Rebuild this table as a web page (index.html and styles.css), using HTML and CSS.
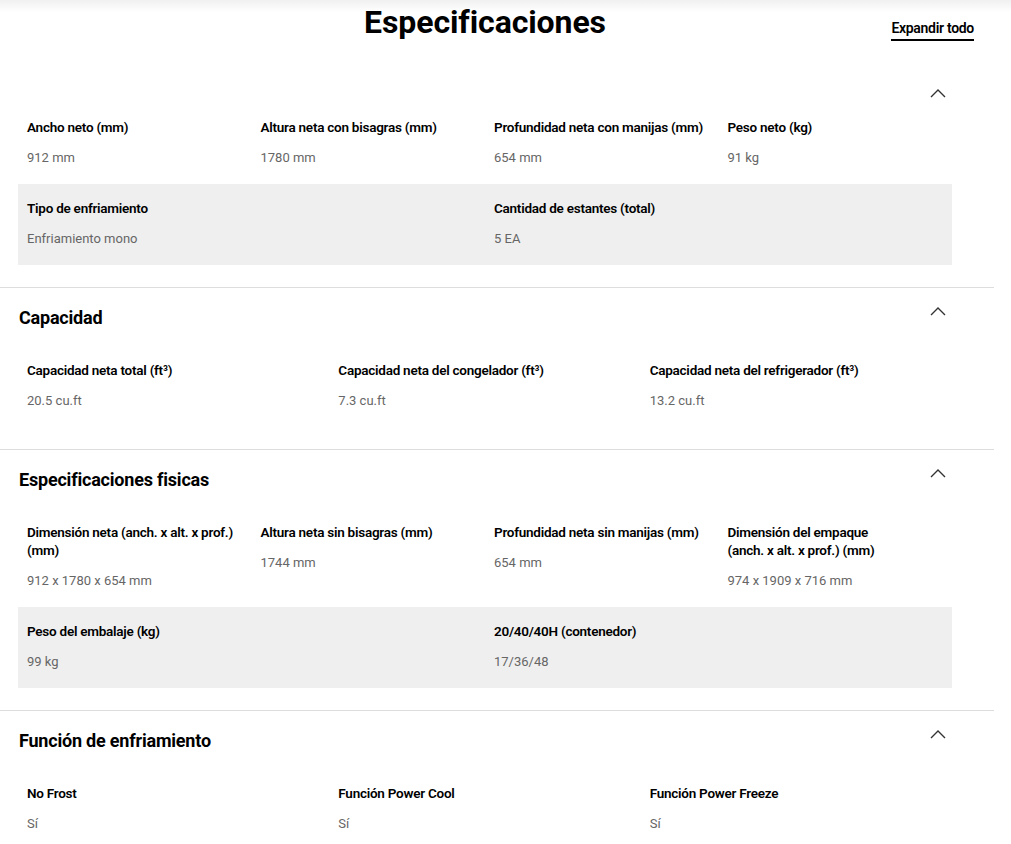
FILE: index.html
```html
<!DOCTYPE html>
<html lang="es">
<head>
<meta charset="utf-8">
<title>Especificaciones</title>
<link rel="stylesheet" href="styles.css">
</head>
<body>
<div class="page">
  <header class="head">
    <h1 class="head-title">Especificaciones</h1>
    <a class="expand" href="#">Expandir todo</a>
  </header>

  <section class="spec">
    <div class="spec-head spec-head-first">
      <span class="spec-title"></span>
      <svg class="chev" width="16" height="9" viewBox="0 0 16 9"><path d="M1 8 L8 1 L15 8" fill="none" stroke="#333" stroke-width="1.4"/></svg>
    </div>
    <div class="row cols-4">
      <div class="cell"><div class="label">Ancho neto (mm)</div><div class="value">912 mm</div></div>
      <div class="cell"><div class="label">Altura neta con bisagras (mm)</div><div class="value">1780 mm</div></div>
      <div class="cell"><div class="label">Profundidad neta con manijas (mm)</div><div class="value">654 mm</div></div>
      <div class="cell"><div class="label">Peso neto (kg)</div><div class="value">91 kg</div></div>
    </div>
    <div class="row cols-2 shaded">
      <div class="cell"><div class="label">Tipo de enfriamiento</div><div class="value">Enfriamiento mono</div></div>
      <div class="cell"><div class="label">Cantidad de estantes (total)</div><div class="value">5 EA</div></div>
    </div>
  </section>

  <section class="spec">
    <div class="spec-head">
      <h2 class="spec-title">Capacidad</h2>
      <svg class="chev" width="16" height="9" viewBox="0 0 16 9"><path d="M1 8 L8 1 L15 8" fill="none" stroke="#333" stroke-width="1.4"/></svg>
    </div>
    <div class="row cols-3">
      <div class="cell"><div class="label">Capacidad neta total (ft³)</div><div class="value">20.5 cu.ft</div></div>
      <div class="cell"><div class="label">Capacidad neta del congelador (ft³)</div><div class="value">7.3 cu.ft</div></div>
      <div class="cell"><div class="label">Capacidad neta del refrigerador (ft³)</div><div class="value">13.2 cu.ft</div></div>
    </div>
  </section>

  <section class="spec">
    <div class="spec-head">
      <h2 class="spec-title">Especificaciones fisicas</h2>
      <svg class="chev" width="16" height="9" viewBox="0 0 16 9"><path d="M1 8 L8 1 L15 8" fill="none" stroke="#333" stroke-width="1.4"/></svg>
    </div>
    <div class="row cols-4">
      <div class="cell"><div class="label">Dimensión neta (anch. x alt. x prof.) (mm)</div><div class="value">912 x 1780 x 654 mm</div></div>
      <div class="cell"><div class="label">Altura neta sin bisagras (mm)</div><div class="value">1744 mm</div></div>
      <div class="cell"><div class="label">Profundidad neta sin manijas (mm)</div><div class="value">654 mm</div></div>
      <div class="cell"><div class="label">Dimensión del empaque<br>(anch. x alt. x prof.) (mm)</div><div class="value">974 x 1909 x 716 mm</div></div>
    </div>
    <div class="row cols-2 shaded">
      <div class="cell"><div class="label">Peso del embalaje (kg)</div><div class="value">99 kg</div></div>
      <div class="cell"><div class="label">20/40/40H (contenedor)</div><div class="value">17/36/48</div></div>
    </div>
  </section>

  <section class="spec">
    <div class="spec-head">
      <h2 class="spec-title">Función de enfriamiento</h2>
      <svg class="chev" width="16" height="9" viewBox="0 0 16 9"><path d="M1 8 L8 1 L15 8" fill="none" stroke="#333" stroke-width="1.4"/></svg>
    </div>
    <div class="row cols-3">
      <div class="cell"><div class="label">No Frost</div><div class="value">Sí</div></div>
      <div class="cell"><div class="label">Función Power Cool</div><div class="value">Sí</div></div>
      <div class="cell"><div class="label">Función Power Freeze</div><div class="value">Sí</div></div>
    </div>
  </section>
</div>
</body>
</html>
```

FILE: styles.css
```css
html, body {
  margin: 0;
  padding: 0;
  background: #fff;
}
body {
  font-family: Roboto, "Noto Sans", Arial, sans-serif;
  color: #000;
  background: linear-gradient(to bottom, rgba(0,0,0,0.06), rgba(0,0,0,0) 12px) no-repeat;
}
.page {
  width: 994px;
  overflow: hidden;
  height: 844px;
}
.head {
  display: grid;
  grid-template-columns: 1fr auto 1fr;
  padding-right: 24px;
  height: 44px;
}
.head-title {
  grid-column: 2;
  margin: 0;
  font-size: 32px;
  line-height: 44px;
  font-weight: 700;
  letter-spacing: -0.1px;
}
.expand {
  grid-column: 3;
  justify-self: end;
  align-self: start;
  margin-top: 19px;
  margin-right: -4px;
  padding-bottom: 1px;
  font-size: 14px;
  line-height: 19px;
  font-weight: 600;
  letter-spacing: -0.3px;
  color: #000;
  text-decoration: none;
  border-bottom: 2px solid #000;
}
.spec {
  padding: 0 42px 22px 18px;
  border-bottom: 1px solid #ddd;
}
.spec-head {
  display: flex;
  justify-content: space-between;
  align-items: flex-start;
  padding-top: 18px;
  margin-bottom: 16px;
}
.spec-head-first {
  padding-top: 45px;
  margin-bottom: 5px;
}
.spec-title {
  margin: 0 0 0 1px;
  font-size: 18px;
  line-height: 24px;
  font-weight: 700;
  letter-spacing: -0.2px;
}
.chev {
  display: block;
  margin-top: 1px;
  margin-right: 6px;
}
.spec-head-first .chev {
  margin-top: 0;
}
.row {
  display: grid;
}
.cols-4 { grid-template-columns: repeat(4, 1fr); }
.cols-3 { grid-template-columns: repeat(3, 1fr); }
.cols-2 { grid-template-columns: repeat(2, 1fr); }
.shaded { background: #efefef; }
.cell {
  padding: 15px 9px 16px;
}
.label {
  font-size: 13.5px;
  line-height: 18px;
  font-weight: 600;
  letter-spacing: -0.25px;
  color: #000;
}
.value {
  margin-top: 11px;
  font-size: 13px;
  line-height: 21px;
  color: #666;
}
```
